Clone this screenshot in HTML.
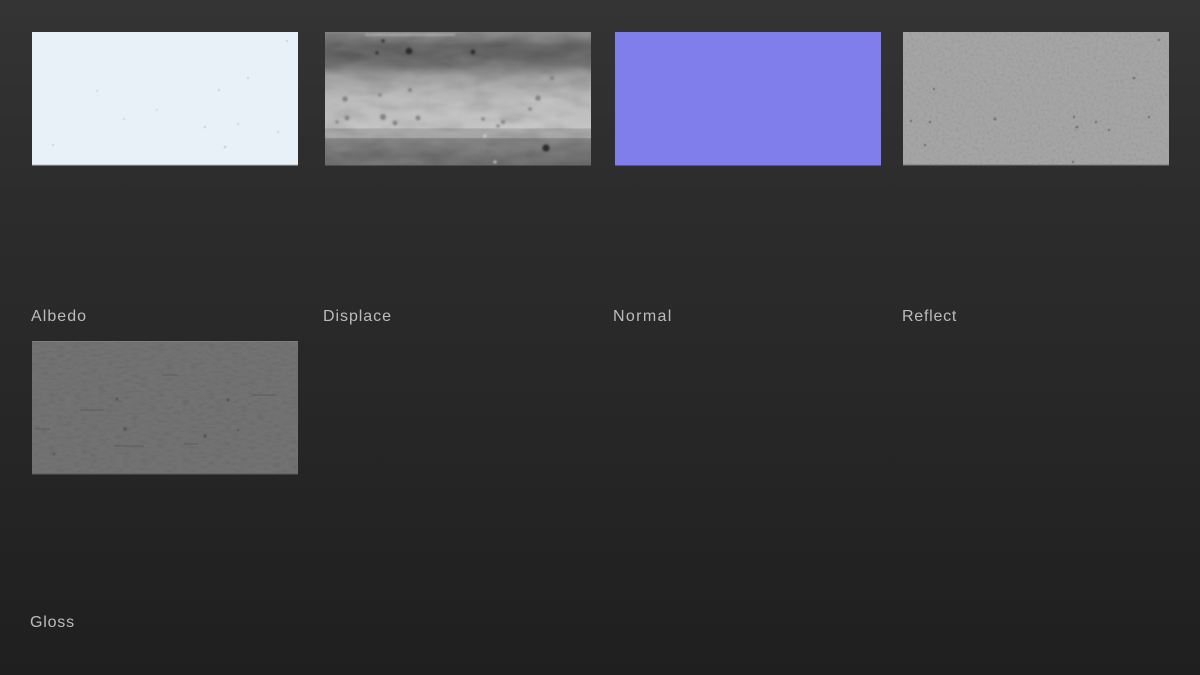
<!DOCTYPE html>
<html>
<head>
<meta charset="utf-8">
<style>
html,body{margin:0;padding:0;width:1200px;height:675px;overflow:hidden;background:#262626}
body{position:relative;background:linear-gradient(180deg,#343434 0%,#2c2c2c 30%,#272727 60%,#1f1f1f 100%);font-family:"Liberation Sans",sans-serif}
.t{position:absolute;width:266px;height:133.5px;display:block}
.l{position:absolute;font-size:16px;line-height:18px;letter-spacing:1.05px;color:#bcbcbc;white-space:nowrap}
</style>
</head>
<body>
<svg width="0" height="0" style="position:absolute">
<defs>
<filter id="nr" x="0" y="0" width="100%" height="100%"><feTurbulence type="fractalNoise" baseFrequency="0.45" numOctaves="2" seed="4"/><feColorMatrix values="0 0 0 0 0 0 0 0 0 0 0 0 0 0 0 1.6 0 0 0 -0.78"/><feGaussianBlur stdDeviation=".4"/></filter>
<filter id="ng" x="0" y="0" width="100%" height="100%"><feTurbulence type="fractalNoise" baseFrequency="0.12 0.5" numOctaves="2" seed="9"/><feColorMatrix values="0 0 0 0 0 0 0 0 0 0 0 0 0 0 0 1.8 0 0 0 -0.86"/><feGaussianBlur stdDeviation=".4"/></filter>
<filter id="nd" x="0" y="0" width="100%" height="100%"><feTurbulence type="fractalNoise" baseFrequency="0.025 0.08" numOctaves="3" seed="7"/><feColorMatrix values="0 0 0 0 1 0 0 0 0 1 0 0 0 0 1 0 2 0 0 -0.85"/><feGaussianBlur stdDeviation="1.2"/></filter>
<filter id="ne" x="0" y="0" width="100%" height="100%"><feTurbulence type="fractalNoise" baseFrequency="0.03 0.1" numOctaves="3" seed="15"/><feColorMatrix values="0 0 0 0 0 0 0 0 0 0 0 0 0 0 0 0 2 0 0 -0.85"/><feGaussianBlur stdDeviation="1.2"/></filter>
<filter id="b1"><feGaussianBlur stdDeviation="1"/></filter>
<filter id="b2"><feGaussianBlur stdDeviation=".6"/></filter>
<linearGradient id="dg" x1="0" y1="0" x2="0" y2="1">
<stop offset="0" stop-color="#8a8a8a"/><stop offset=".04" stop-color="#7d7d7d"/><stop offset=".1" stop-color="#656565"/><stop offset=".17" stop-color="#626262"/><stop offset=".25" stop-color="#747474"/><stop offset=".33" stop-color="#9c9c9c"/><stop offset=".42" stop-color="#aeaeae"/><stop offset=".52" stop-color="#bcbcbc"/><stop offset=".65" stop-color="#c0c0c0"/><stop offset=".72" stop-color="#c4c4c4"/><stop offset=".725" stop-color="#a8a8a8"/><stop offset=".79" stop-color="#a6a6a6"/><stop offset=".8" stop-color="#838383"/><stop offset=".9" stop-color="#747474"/><stop offset="1" stop-color="#6c6c6c"/>
</linearGradient>
</defs>
</svg>

<svg class="t" style="left:32px;top:32px" viewBox="0 0 266 133.5">
<rect width="266" height="133.5" fill="#e8f0f8"/>
<g fill="#c0c8d2" filter="url(#b2)"><circle cx="173" cy="95" r="1.1"/><circle cx="206" cy="92" r="1"/><circle cx="216" cy="46" r="1"/><circle cx="246" cy="100" r="1"/><circle cx="21" cy="113" r="1"/><circle cx="193" cy="115" r="1.2"/><circle cx="125" cy="78" r=".9"/><circle cx="92" cy="87" r=".9"/><circle cx="255" cy="9" r="1"/><circle cx="187" cy="58" r="1"/><circle cx="65" cy="59" r=".9"/></g>
<rect y="132.5" width="266" height="1" fill="#b5bac0"/>
</svg>

<svg class="t" style="left:325px;top:32px" viewBox="0 0 266 133.5">
<rect width="266" height="133.5" fill="url(#dg)"/>
<rect width="266" height="133.5" filter="url(#nd)" opacity=".12"/>
<rect width="266" height="133.5" filter="url(#ne)" opacity=".12"/>
<g filter="url(#b1)">
<g fill="#2a2a2a"><circle cx="84" cy="19" r="3.4"/><circle cx="148" cy="20" r="2.4"/><circle cx="52" cy="21" r="1.6"/><circle cx="58" cy="9" r="1.6"/><circle cx="221" cy="116" r="3.6"/></g>
<g fill="#808080"><circle cx="85" cy="58" r="2"/><circle cx="58" cy="85" r="3"/><circle cx="22" cy="86" r="2.4"/><circle cx="70" cy="91" r="2.4"/><circle cx="93" cy="86" r="2.4"/><circle cx="158" cy="87" r="1.8"/><circle cx="205" cy="77" r="1.8"/><circle cx="213" cy="66" r="2.6"/><circle cx="20" cy="67" r="2.6"/><circle cx="227" cy="46" r="2.2"/><circle cx="178" cy="90" r="2"/><circle cx="173" cy="94" r="1.6"/><circle cx="55" cy="63" r="1.6"/><circle cx="12" cy="90" r="1.6"/></g>
<g fill="#dcdcdc"><circle cx="170" cy="130" r="1.4"/><circle cx="160" cy="104" r="1.4"/><rect x="40" y="2" width="90" height="1.4" opacity=".6"/></g>
</g>
</svg>

<svg class="t" style="left:615px;top:32px" viewBox="0 0 266 133.5">
<rect width="266" height="133.5" fill="#807eea"/>
</svg>

<svg class="t" style="left:903px;top:32px" viewBox="0 0 266 133.5">
<rect width="266" height="133.5" fill="#a5a5a5"/>
<rect width="266" height="133.5" filter="url(#nr)" opacity=".16"/>
<g fill="#666" filter="url(#b2)"><circle cx="256" cy="8" r="1.1"/><circle cx="31" cy="57" r="1.1"/><circle cx="8" cy="89" r="1.1"/><circle cx="27" cy="90" r="1.1"/><circle cx="22" cy="113" r="1.1"/><circle cx="92" cy="87" r="1.3"/><circle cx="174" cy="95" r="1.3"/><circle cx="206" cy="98" r="1.1"/><circle cx="246" cy="85" r="1.1"/><circle cx="231" cy="46" r="1.3"/><circle cx="193" cy="90" r="1.1"/><circle cx="171" cy="85" r="1.1"/><circle cx="170" cy="130" r="1.1"/></g>
<rect y="132.5" width="266" height="1" fill="#7a7a7a"/>
</svg>

<svg class="t" style="left:32px;top:341px" viewBox="0 0 266 133.5">
<rect width="266" height="133.5" fill="#727272"/>
<rect width="266" height="133.5" filter="url(#ng)" opacity=".12"/>
<g stroke="#5c5c5c" stroke-width="1" fill="none"><path d="M48 69h24M82 105h30M130 34h16M220 54h24M4 88h14M152 103h14"/></g>
<g fill="#555" filter="url(#b2)"><circle cx="85" cy="58" r="1.5"/><circle cx="196" cy="59" r="1.5"/><circle cx="173" cy="95" r="1.7"/><circle cx="93" cy="88" r="1.7"/><circle cx="22" cy="113" r="1.1"/><circle cx="206" cy="89" r="1.1"/></g>
<rect y="0" width="266" height="1" fill="#7d7d7d"/>
<rect y="132.5" width="266" height="1" fill="#5c5c5c"/>
</svg>

<div class="l" style="left:31px;top:308px">Albedo</div>
<div class="l" style="left:323px;top:308px;letter-spacing:.95px">Displace</div>
<div class="l" style="left:613px;top:308px;letter-spacing:1.35px">Normal</div>
<div class="l" style="left:902px;top:308px;letter-spacing:.75px">Reflect</div>
<div class="l" style="left:30px;top:614px;letter-spacing:.8px">Gloss</div>
</body>
</html>
